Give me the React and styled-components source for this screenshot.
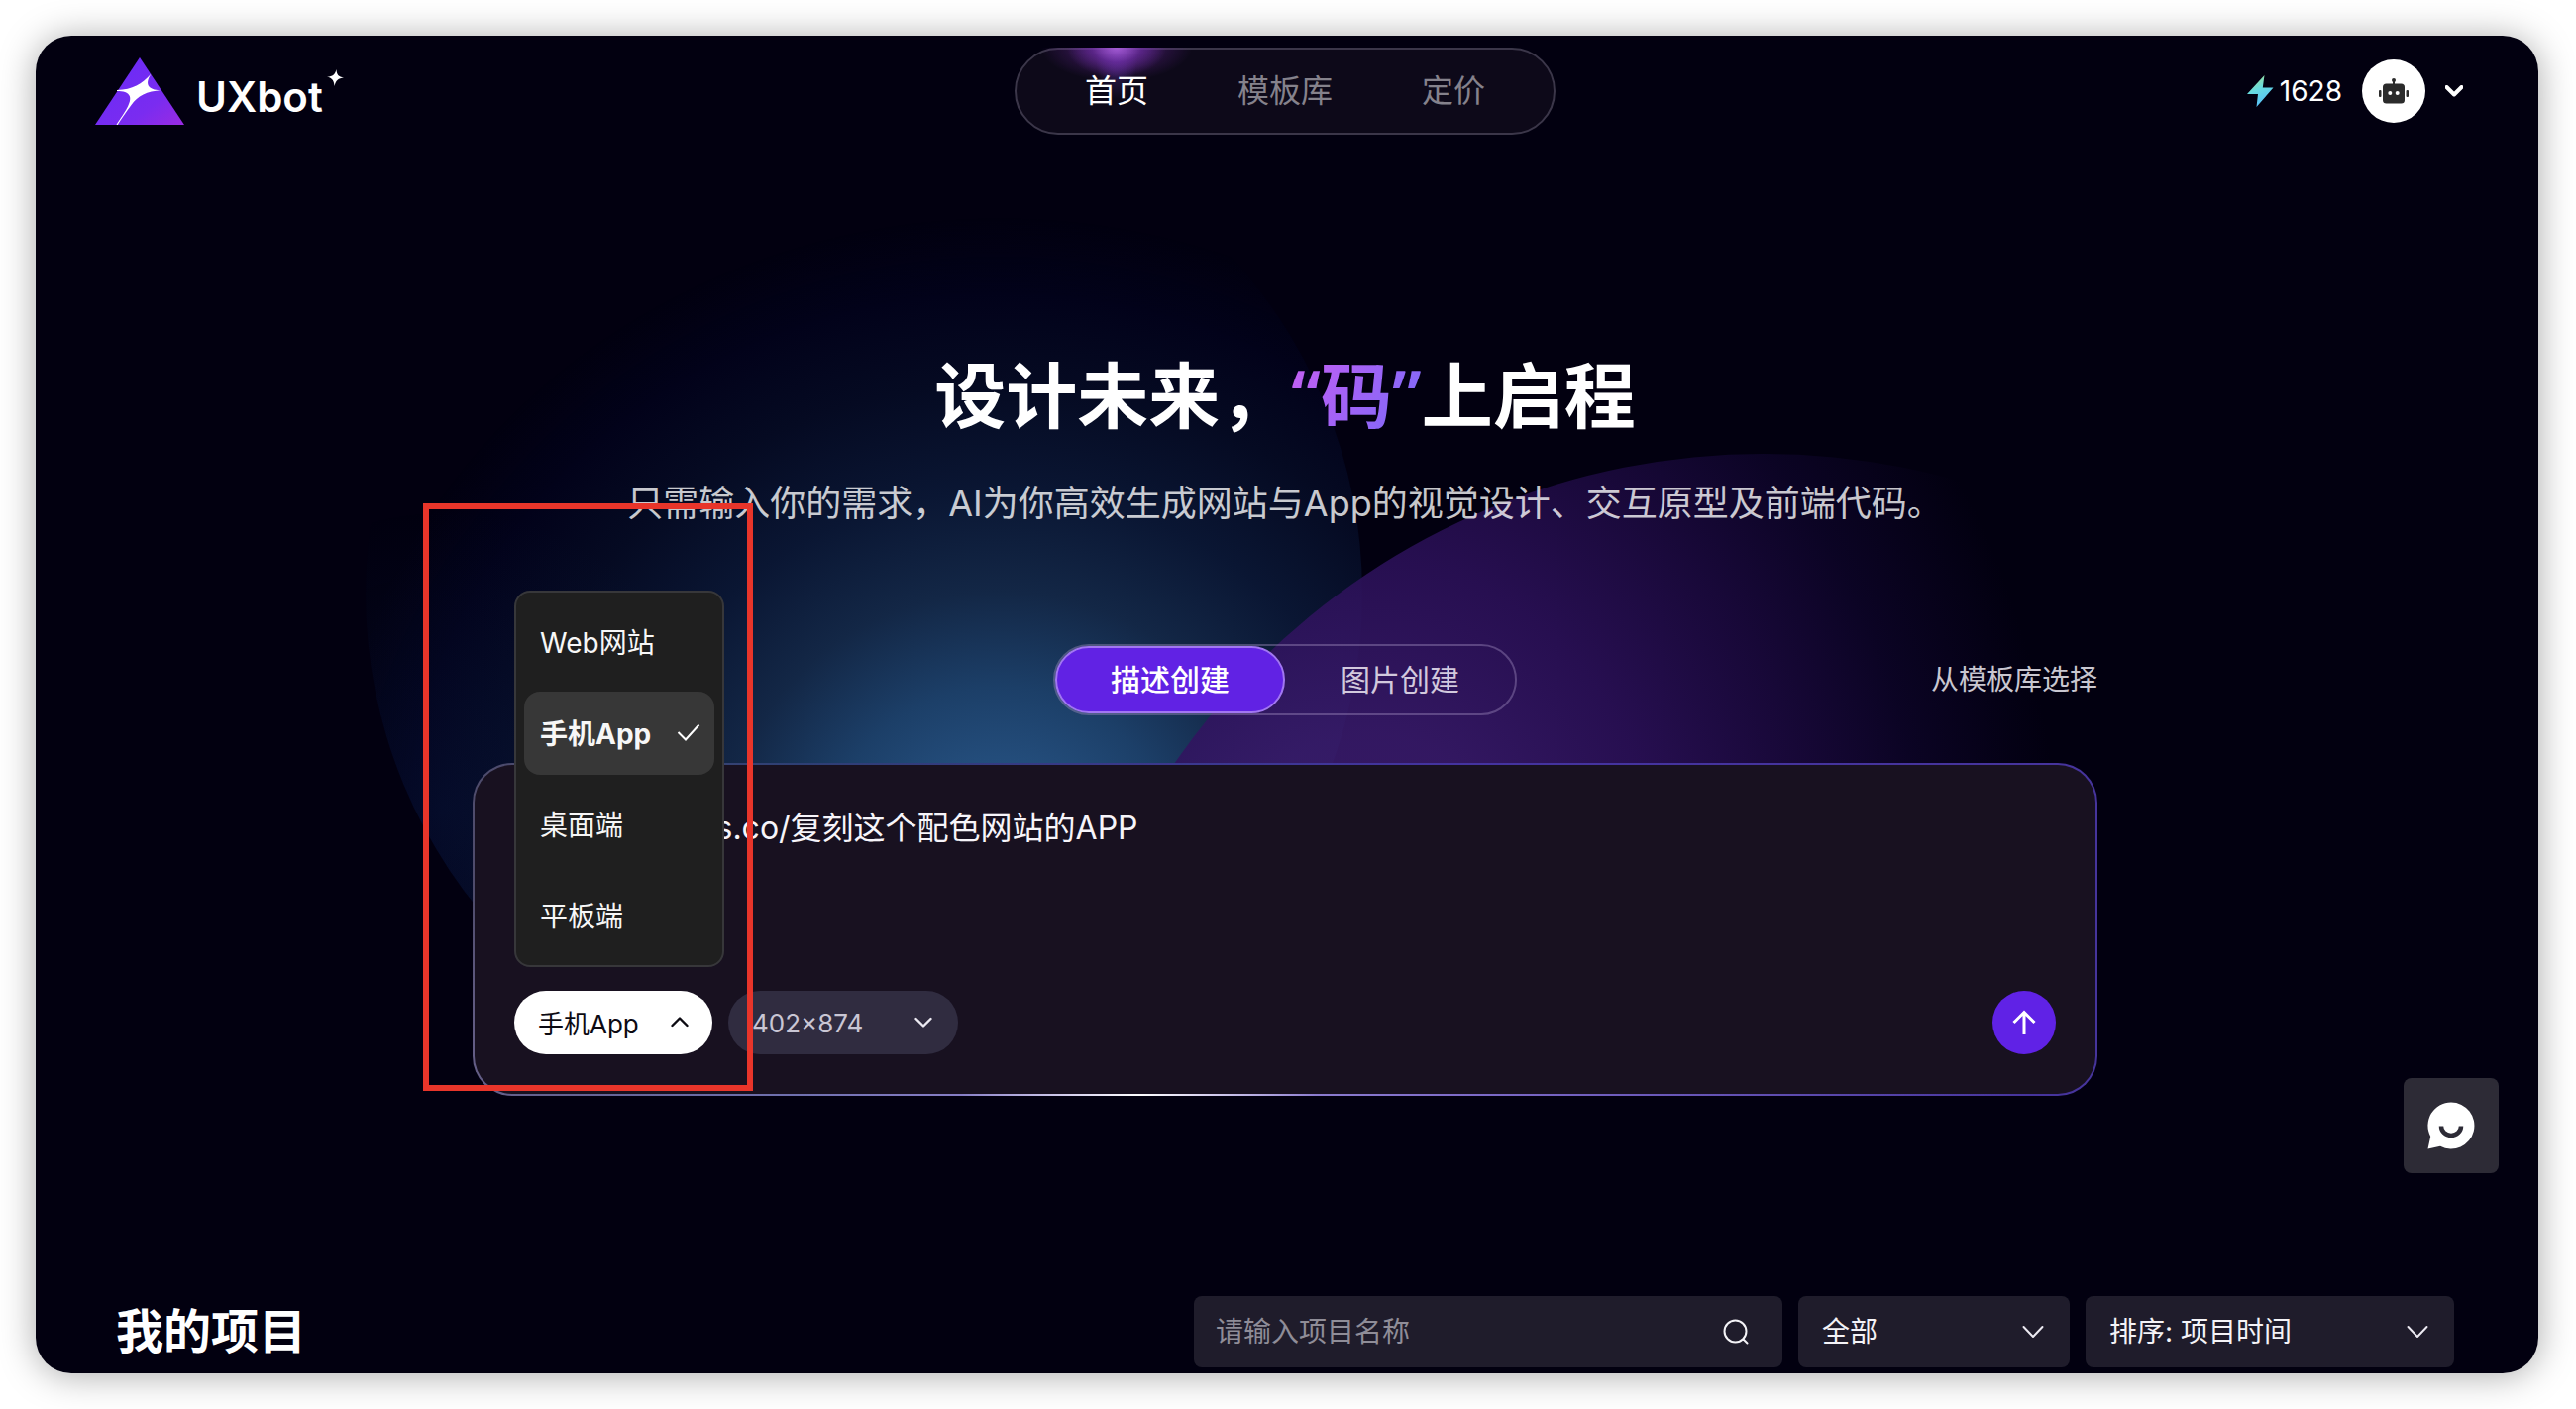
import React, { useState } from "react";
import styled, { createGlobalStyle, css } from "styled-components";

const GlobalStyle = createGlobalStyle`
  *, *::before, *::after { box-sizing: border-box; }
  body {
    margin: 0;
    background: #fff;
    color: #fff;
    font-family: Inter, "Noto Sans CJK SC", sans-serif;
    font-size: 28px;
  }
  button, input, select, textarea { font: inherit; color: inherit; }
  h1, h2, p, ul { margin: 0; padding: 0; }
`;

const Page = styled.div`
  min-height: 100vh;
  padding: 36px 38px 36px 36px;
  display: flex;
`;

const Window = styled.div`
  position: relative;
  flex: 1;
  min-width: 0;
  padding-right: 4px;
  overflow: hidden;
  border-radius: 36px;
  background: #020010;
`;

const Frame = styled.div`
  flex: 1;
  min-width: 0;
  display: flex;
  border-radius: 36px;
  box-shadow: 0 2px 36px rgba(0, 0, 0, 0.34);
`;

const Header = styled.header`
  position: relative;
  z-index: 1;
  display: grid;
  grid-template-columns: 1fr auto 1fr;
  align-items: center;
  height: 112px;
  padding: 0 60px;
`;

const Logo = styled.a`
  display: flex;
  align-items: flex-start;
  color: #fff;
  text-decoration: none;
`;

const Wordmark = styled.span`
  padding: 16px 4px 0 12px;
  font-size: 42px;
  line-height: 48px;
  font-weight: 600;
`;

const LogoSpark = styled.svg`
  margin-top: 12px;
`;

const Nav = styled.nav`
  display: flex;
  height: 88px;
  padding: 0 24px;
  border: 2px solid #3b3649;
  border-radius: 44px;
  background: #0d0919;
`;

const NavLink = styled.a`
  position: relative;
  display: flex;
  align-items: center;
  padding: 0 45px;
  font-size: 32px;
  line-height: 48px;
  text-decoration: none;
  color: ${(p) => (p.$active ? "#fff" : "#85828c")};

  ${(p) =>
    p.$active &&
    css`
      &::before {
        content: "";
        position: absolute;
        top: -2px;
        left: 0;
        right: 0;
        height: 60px;
        background:
          radial-gradient(ellipse 50px 30px at 50% 0, rgba(184, 108, 232, 0.75), rgba(120, 50, 180, 0.5) 50%, transparent),
          radial-gradient(ellipse 76px 34px at 50% 0, rgba(110, 40, 160, 0.7), transparent),
          radial-gradient(ellipse 22px 52px at 50% 0, rgba(110, 60, 190, 0.6), transparent);
      }
    `}
`;

const NavText = styled.span`
  position: relative;
`;

const Account = styled.div`
  display: flex;
  justify-content: flex-end;
  align-items: center;
  padding-right: 12px;
`;

const Credits = styled.span`
  display: flex;
  align-items: center;
  gap: 6px;
  margin-right: 20px;
  font-size: 28px;
`;

const AccountButton = styled.button`
  display: flex;
  align-items: center;
  gap: 20px;
  padding: 0;
  border: 0;
  background: none;
  cursor: pointer;
`;

const Avatar = styled.span`
  display: grid;
  place-items: center;
  width: 64px;
  height: 64px;
  border-radius: 50%;
  background: #fff;
`;

const Hero = styled.section`
  display: flex;
  flex-direction: column;
  align-items: center;
  padding: 202px 40px 0;
`;

const Backdrop = styled.div`
  position: absolute;
  top: 0;
  left: 0;
  right: 4px;
  height: 1040px;
  overflow: hidden;
`;

const BlueGlow = styled.div`
  position: absolute;
  top: 60px;
  left: calc(50% - 928px);
  width: 1006px;
  height: 1006px;
  border-radius: 50%;
  background:
    radial-gradient(circle 300px at 80px 720px, rgba(10, 28, 72, 0.3), transparent),
    radial-gradient(ellipse 680px 640px at 640px 764px, #27558a 0%, #234c7a 15%, #1c3f68 26%, #132746 41%, #0a1633 57%, #050a22 74%, #02021a 88%, rgba(2, 0, 16, 0) 100%);
`;

const PurpleGlow = styled.div`
  position: absolute;
  top: 422px;
  left: calc(50% - 239px);
  width: 1444px;
  height: 1444px;
  border-radius: 50%;
  background: radial-gradient(ellipse 700px 800px at 322px 442px, rgba(62, 30, 112, 0.88) 0%, rgba(56, 26, 106, 0.9) 20%, rgba(42, 16, 86, 0.92) 42%, rgba(26, 9, 60, 0.92) 63%, rgba(12, 4, 38, 0.9) 80%, rgba(2, 0, 16, 0) 100%);
`;

const Title = styled.h1`
  position: relative;
  height: 96px;
  font-size: 72px;
  line-height: 96px;
  font-weight: 600;
  text-align: center;
`;

const TitleAccent = styled.span`
  font-family: "Noto Sans", "Noto Sans CJK SC", sans-serif;
  background: linear-gradient(120deg, #c060f4 10%, #9f63f6 50%, #7f6af8 90%);
  background-clip: text;
  -webkit-background-clip: text;
  color: transparent;
`;

const Subtitle = styled.p`
  position: relative;
  margin-top: 36px;
  font-size: 36px;
  line-height: 52px;
  color: rgba(255, 255, 255, 0.78);
  text-align: center;
`;

const Workspace = styled.div`
  position: relative;
  width: 100%;
  max-width: 1640px;
  margin-top: 116px;
`;

const ModeRow = styled.div`
  display: grid;
  grid-template-columns: 1fr auto 1fr;
  align-items: center;
  margin-bottom: 48px;
`;

const Tabs = styled.div`
  grid-column: 2;
  display: flex;
  border: 2px solid rgba(160, 140, 190, 0.42);
  border-radius: 36px;
`;

const Tab = styled.button`
  width: 232px;
  height: 68px;
  padding: 0 0 4px;
  border: 2px solid ${(p) => (p.$active ? "#a277f2" : "transparent")};
  border-radius: 34px;
  background: ${(p) => (p.$active ? "#6122e4" : "transparent")};
  color: ${(p) => (p.$active ? "#fff" : "#d2c9dd")};
  font-size: 30px;
  font-weight: ${(p) => (p.$active ? 500 : 400)};
  cursor: pointer;
`;

const TemplateLink = styled.a`
  justify-self: end;
  color: #c9c7d0;
  line-height: 40px;
  text-decoration: none;
`;

const Composer = styled.form`
  position: relative;
  display: flex;
  flex-direction: column;
  padding: 40px;
  border: 2px solid transparent;
  border-radius: 40px;
  background:
    linear-gradient(#181120, #181120) padding-box,
    radial-gradient(ellipse 180px 40px at 41% 100%, #fff, transparent) border-box,
    radial-gradient(ellipse 900px 300px at 41% 100%, rgba(190, 170, 245, 0.75), transparent) border-box,
    linear-gradient(90deg, #4f4c6c, #2d3f74 20%, #4433a0 60%, #46349c) border-box;
`;

const Prompt = styled.textarea`
  display: block;
  width: 100%;
  height: 188px;
  padding: 0;
  border: 0;
  outline: 0;
  resize: none;
  background: transparent;
  color: #f7f5fa;
  font-size: 32px;
  line-height: 48px;
`;

const ComposerBar = styled.div`
  display: flex;
  align-items: center;
  gap: 16px;
`;

const Picker = styled.div`
  position: relative;
`;

const PickerButton = styled.button`
  display: flex;
  align-items: center;
  justify-content: space-between;
  width: 200px;
  height: 64px;
  padding: 0 24px 2px;
  border: 0;
  border-radius: 32px;
  background: #fff;
  color: #0c0a12;
  font-size: 26px;
  cursor: pointer;
`;

const Menu = styled.ul`
  position: absolute;
  left: 0;
  bottom: calc(100% + 24px);
  display: flex;
  flex-direction: column;
  gap: 8px;
  width: 212px;
  padding: 8px;
  border: 2px solid #37373a;
  border-radius: 16px;
  background: #1f1f1f;
  list-style: none;
`;

const MenuItem = styled.button`
  display: flex;
  align-items: center;
  justify-content: space-between;
  width: 100%;
  height: 84px;
  padding: 0 14px 2px 16px;
  border: 0;
  border-radius: 16px;
  background: ${(p) => (p.$active ? "#373737" : "transparent")};
  color: #f7f7f7;
  font-size: 28px;
  font-weight: ${(p) => (p.$active ? 700 : 400)};
  text-align: left;
  cursor: pointer;
`;

const SelectBox = styled.label`
  position: relative;
  display: block;
  width: ${(p) => p.$width}px;
  min-width: 0;
`;

const SelectField = styled.select`
  appearance: none;
  display: block;
  width: 100%;
  height: ${(p) => (p.$pill ? 64 : 72)}px;
  padding: 0 60px 0 24px;
  border: 0;
  border-radius: ${(p) => (p.$pill ? 32 : 8)}px;
  background: ${(p) => (p.$pill ? "#302c40" : "#1f1c2b")};
  color: ${(p) => (p.$pill ? "#c9c6d4" : "#f4f3f7")};
  font-size: ${(p) => (p.$pill ? 26 : 28)}px;
`;

const SelectArrow = styled.span`
  position: absolute;
  top: 0;
  bottom: 0;
  right: 26px;
  display: flex;
  align-items: center;
  color: #eceaf2;
  pointer-events: none;
`;

const SendButton = styled.button`
  display: grid;
  place-items: center;
  width: 64px;
  height: 64px;
  margin-left: auto;
  padding: 0;
  border: 0;
  border-radius: 50%;
  background: #6022e6;
  cursor: pointer;
`;

const Highlight = styled.div`
  position: absolute;
  top: -264px;
  left: -52px;
  width: 333px;
  height: 593px;
  border: 6px solid #e8352a;
  pointer-events: none;
`;

const Projects = styled.section`
  display: flex;
  align-items: center;
  justify-content: space-between;
  margin-top: 202px;
  padding: 0 81px;
`;

const ProjectsTitle = styled.h2`
  font-size: 48px;
  line-height: 72px;
  font-weight: 600;
`;

const Filters = styled.div`
  display: flex;
  gap: 16px;
`;

const SearchBox = styled.label`
  display: flex;
  align-items: center;
  width: 594px;
  height: 72px;
  padding: 0 34px 0 22px;
  border-radius: 8px;
  background: #1f1c2b;
`;

const SearchInput = styled.input`
  flex: 1;
  min-width: 0;
  padding: 0;
  border: 0;
  outline: 0;
  background: transparent;
  font-size: 28px;

  &::placeholder { color: #8f8d98; opacity: 1; }
`;

const ChatButton = styled.button`
  position: absolute;
  right: 40px;
  bottom: 202px;
  display: grid;
  place-items: center;
  width: 96px;
  height: 96px;
  padding: 0;
  border: 0;
  border-radius: 8px;
  background: #2d2b36;
  cursor: pointer;
`;

function Chevron({ up, width = 18, stroke = 2.4 }) {
  return (
    <svg width={width} height="12" viewBox="0 0 18 12" fill="none" stroke="currentColor" strokeWidth={stroke} strokeLinecap="round" strokeLinejoin="round" aria-hidden="true">
      <path d={up ? "M1.5 10 9 2.5 16.5 10" : "M1.5 2 9 9.5 16.5 2"} />
    </svg>
  );
}

function WideChevron() {
  return (
    <svg width="22" height="14" viewBox="0 0 22 14" fill="none" stroke="currentColor" strokeWidth="2" strokeLinecap="round" strokeLinejoin="round" aria-hidden="true">
      <path d="M1.500 2 11 12 20.500 2" />
    </svg>
  );
}

function LogoMark() {
  return (
    <svg width="90" height="68" viewBox="0 0 90 68" aria-hidden="true">
      <defs>
        <linearGradient id="mark" x1="0.2" y1="0.2" x2="1" y2="1">
          <stop offset="0" stopColor="#6c2bf6" />
          <stop offset="0.6" stopColor="#7a2cf0" />
          <stop offset="1" stopColor="#9a2be2" />
        </linearGradient>
      </defs>
      <path d="M45 0 90 68H0Z" fill="url(#mark)" />
      <path d="M56.5 16.500C50.500 25.500 51.500 33 67 33.300C52 34 43 39 36.500 48C31 55 27 61.500 22.700 68H21.500C27 59 37 47 35 39.500C33.500 35 28 34 22 34V33C38 32.500 47 27 56.500 16.500Z" fill="#fff" />
    </svg>
  );
}

function Bolt() {
  return (
    <svg width="27" height="32" viewBox="0 0 27 32" aria-hidden="true">
      <defs>
        <linearGradient id="bolt" x1="0.2" y1="0" x2="0.6" y2="1">
          <stop offset="0" stopColor="#a5e08c" />
          <stop offset="0.45" stopColor="#67dbe0" />
          <stop offset="1" stopColor="#55bdfb" />
        </linearGradient>
      </defs>
      <path d="M17.500 0 15.800 12.500H26.500L9.500 32 11 19H0Z" fill="url(#bolt)" />
    </svg>
  );
}

function Robot() {
  return (
    <svg width="30" height="27" viewBox="0 0 30 27" fill="#2b2b2b" aria-hidden="true">
      <circle cx="15" cy="2" r="2" />
      <rect x="14" y="2" width="2" height="4" />
      <rect x="4" y="5.500" width="22" height="20" rx="3.500" />
      <rect x="0" y="12" width="2.500" height="7" rx="1" />
      <rect x="27.500" y="12" width="2.500" height="7" rx="1" />
      <circle cx="11.300" cy="15" r="2" fill="#fff" />
      <circle cx="18.700" cy="15" r="2" fill="#fff" />
    </svg>
  );
}

const DEVICES = ["Web网站", "手机App", "桌面端", "平板端"];

export default function App() {
  const [device, setDevice] = useState("手机App");
  const [open, setOpen] = useState(true);
  const [mode, setMode] = useState("描述创建");

  return (
    <Page>
      <GlobalStyle />
      <Frame>
        <Window>
          <Backdrop>
            <BlueGlow />
            <PurpleGlow />
          </Backdrop>

          <Header>
            <Logo href="#" aria-label="UXbot">
              <LogoMark />
              <Wordmark>UXbot</Wordmark>
              <LogoSpark width="17" height="17" viewBox="0 0 17 17" aria-hidden="true">
                <path d="M9.500 0C9.800 5.500 11.500 7.500 17 8.500C11.500 9 9 11 7.500 17C7.200 11.500 5.500 9 0 7.500C6 7.500 8 5.500 9.500 0Z" fill="#fff" />
              </LogoSpark>
            </Logo>
            <Nav>
              <NavLink href="#" $active><NavText>首页</NavText></NavLink>
              <NavLink href="#">模板库</NavLink>
              <NavLink href="#">定价</NavLink>
            </Nav>
            <Account>
              <Credits><Bolt />1628</Credits>
              <AccountButton type="button" aria-label="账户">
                <Avatar><Robot /></Avatar>
                <Chevron stroke={4} />
              </AccountButton>
            </Account>
          </Header>

          <Hero>
            <Title>设计未来，<TitleAccent>“码”</TitleAccent>上启程</Title>
            <Subtitle>只需输入你的需求，AI为你高效生成网站与App的视觉设计、交互原型及前端代码。</Subtitle>

            <Workspace>
              <ModeRow>
                <Tabs role="tablist">
                  {["描述创建", "图片创建"].map((name) => (
                    <Tab key={name} type="button" role="tab" aria-selected={mode === name} $active={mode === name} onClick={() => setMode(name)}>
                      {name}
                    </Tab>
                  ))}
                </Tabs>
                <TemplateLink href="#">从模板库选择</TemplateLink>
              </ModeRow>

              <Composer onSubmit={(e) => e.preventDefault()}>
                <Prompt aria-label="描述" spellCheck={false} defaultValue="https://coolors.co/复刻这个配色网站的APP" />
                <ComposerBar>
                  <Picker>
                    <PickerButton type="button" aria-haspopup="listbox" aria-expanded={open} onClick={() => setOpen(!open)}>
                      {device}
                      <Chevron up />
                    </PickerButton>
                    {open && (
                      <Menu>
                        {DEVICES.map((name) => (
                          <li key={name}>
                            <MenuItem type="button" $active={name === device} onClick={() => setDevice(name)}>
                              {name}
                              {name === device && (
                                <svg width="24" height="18" viewBox="0 0 24 18" fill="none" stroke="#fff" strokeWidth="2" aria-hidden="true">
                                  <path d="M1.500 9 9 16.500 22.500 1.500" />
                                </svg>
                              )}
                            </MenuItem>
                          </li>
                        ))}
                      </Menu>
                    )}
                  </Picker>
                  <SelectBox $width={232}>
                    <SelectField $pill aria-label="尺寸"><option>402×874</option></SelectField>
                    <SelectArrow><Chevron /></SelectArrow>
                  </SelectBox>
                  <SendButton type="submit" aria-label="发送">
                    <svg width="24" height="26" viewBox="0 0 24 26" fill="none" stroke="#fff" strokeWidth="3" aria-hidden="true">
                      <path d="M12 25V3M1.500 13 12 2.500 22.500 13" />
                    </svg>
                  </SendButton>
                </ComposerBar>
                <Highlight />
              </Composer>
            </Workspace>
          </Hero>

          <Projects>
            <ProjectsTitle>我的项目</ProjectsTitle>
            <Filters>
              <SearchBox>
                <SearchInput type="text" placeholder="请输入项目名称" aria-label="项目名称" />
                <svg width="26" height="26" viewBox="0 0 26 26" fill="none" stroke="#f4f3f7" strokeWidth="2" strokeLinecap="round" aria-hidden="true">
                  <circle cx="12.500" cy="12.500" r="11" />
                  <path d="M20.500 20.500 24.500 24.500" />
                </svg>
              </SearchBox>
              <SelectBox $width={274}>
                <SelectField aria-label="类型"><option>全部</option></SelectField>
                <SelectArrow><WideChevron /></SelectArrow>
              </SelectBox>
              <SelectBox $width={372}>
                <SelectField aria-label="排序"><option>排序: 项目时间</option></SelectField>
                <SelectArrow><WideChevron /></SelectArrow>
              </SelectBox>
            </Filters>
          </Projects>

          <ChatButton type="button" aria-label="在线客服">
            <svg width="48" height="48" viewBox="0 0 48 48" aria-hidden="true">
              <path d="M24 0.500A23.500 23.500 0 1 1 13 44.800L0.500 47.500 3.200 35A23.500 23.500 0 0 1 24 0.500Z" fill="#fff" />
              <path d="M14 24.500A10 9.500 0 0 0 34 24.500" fill="none" stroke="#2d2b36" strokeWidth="4.500" />
            </svg>
          </ChatButton>
        </Window>
      </Frame>
    </Page>
  );
}
